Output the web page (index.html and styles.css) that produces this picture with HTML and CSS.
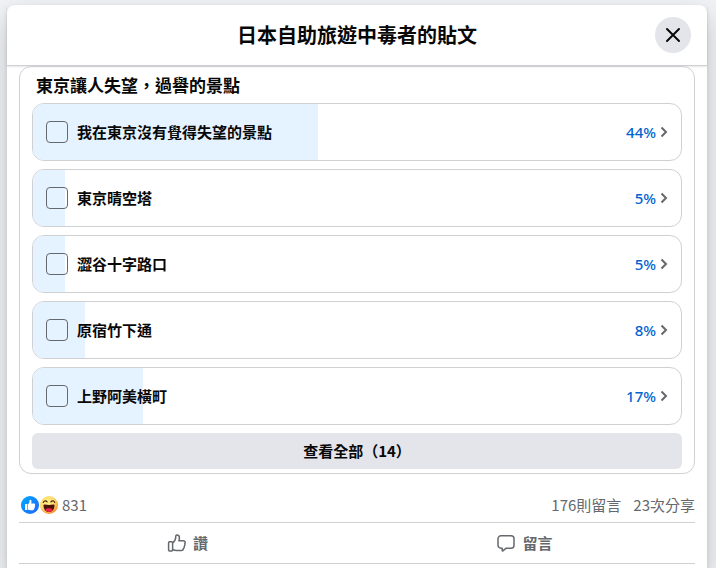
FILE: index.html
```html
<!DOCTYPE html>
<html lang="zh-Hant">
<head>
<meta charset="utf-8">
<meta name="viewport" content="width=device-width, initial-scale=1">
<title>日本自助旅遊中毒者的貼文</title>
<link rel="stylesheet" href="styles.css">
</head>
<body>
<main class="dialog" role="dialog" aria-labelledby="dialog-title">
  <header class="dialog-header">
    <h1 class="dialog-title" id="dialog-title">日本自助旅遊中毒者的貼文</h1>
    <button class="close" type="button" aria-label="關閉">
      <svg width="20" height="20" viewBox="0 0 20 20" fill="none" stroke="currentColor" stroke-width="2" stroke-linecap="round"><path d="M4 4l12 12M16 4L4 16"/></svg>
    </button>
  </header>
  <div class="dialog-body">
    <section class="poll">
      <h2 class="question">東京讓人失望，過譽的景點</h2>
      <ul class="options">
        <li class="option">
          <span class="fill" style="width:44%"></span>
          <input class="check" type="checkbox" id="o1"><label class="name" for="o1">我在東京沒有覺得失望的景點</label>
          <button class="percent" type="button">44%<svg class="chevron" width="8" height="12" viewBox="0 0 8 12"><path d="M1.500 1.500L6 6l-4.500 4.500"/></svg></button>
        </li>
        <li class="option">
          <span class="fill" style="width:5%"></span>
          <input class="check" type="checkbox" id="o2"><label class="name" for="o2">東京晴空塔</label>
          <button class="percent" type="button">5%<svg class="chevron" width="8" height="12" viewBox="0 0 8 12"><path d="M1.500 1.500L6 6l-4.500 4.500"/></svg></button>
        </li>
        <li class="option">
          <span class="fill" style="width:5%"></span>
          <input class="check" type="checkbox" id="o3"><label class="name" for="o3">澀谷十字路口</label>
          <button class="percent" type="button">5%<svg class="chevron" width="8" height="12" viewBox="0 0 8 12"><path d="M1.500 1.500L6 6l-4.500 4.500"/></svg></button>
        </li>
        <li class="option">
          <span class="fill" style="width:8%"></span>
          <input class="check" type="checkbox" id="o4"><label class="name" for="o4">原宿竹下通</label>
          <button class="percent" type="button">8%<svg class="chevron" width="8" height="12" viewBox="0 0 8 12"><path d="M1.500 1.500L6 6l-4.500 4.500"/></svg></button>
        </li>
        <li class="option">
          <span class="fill" style="width:17%"></span>
          <input class="check" type="checkbox" id="o5"><label class="name" for="o5">上野阿美橫町</label>
          <button class="percent" type="button">17%<svg class="chevron" width="8" height="12" viewBox="0 0 8 12"><path d="M1.500 1.500L6 6l-4.500 4.500"/></svg></button>
        </li>
      </ul>
      <button class="view-all" type="button">查看全部（14）</button>
    </section>
    <div class="stats">
      <svg class="reaction" width="18" height="18" viewBox="0 0 18 18" role="img" aria-label="讚">
        <defs><linearGradient id="blue" x1="0" y1="0" x2="1" y2="1"><stop offset="0" stop-color="#02adfc"/><stop offset="0.500" stop-color="#0d86ff"/><stop offset="1" stop-color="#2a64f6"/></linearGradient></defs>
        <circle cx="9" cy="9" r="9" fill="url(#blue)"/>
        <rect x="4" y="8" width="2.400" height="6" rx="0.600" fill="#fff"/>
        <path d="M7 8.300C8 7.500 8.500 6.500 8.500 5.300V4.500c0-1.200 2-1 2 .8 0 .8-.1 1.500-.3 2.200h2.600c1.300 0 1.700 1.200 1 2 .5.600.4 1.400-.2 1.800.3.700 0 1.300-.6 1.600.1.800-.4 1.300-1.300 1.300H9.300c-1 0-1.700-.3-2.300-.7z" fill="#fff"/>
      </svg>
      <svg class="reaction" width="18" height="18" viewBox="0 0 18 18" role="img" aria-label="哈">
        <defs><radialGradient id="yellow" cx="0.400" cy="0.350" r="0.700"><stop offset="0" stop-color="#fff287"/><stop offset="0.600" stop-color="#ffd76a"/><stop offset="1" stop-color="#f68628"/></radialGradient></defs>
        <circle cx="9" cy="9" r="9" fill="url(#yellow)"/>
        <path d="M3.300 6.500c.6-1.800 2.600-2.200 3.800-.6M10.900 5.900c1.200-1.600 3.200-1.200 3.800.6" fill="none" stroke="#4b280e" stroke-width="1.200" stroke-linecap="round"/>
        <path d="M3.500 9.500c0-.8.600-1 1.200-.9 2.900.5 5.700.5 8.600 0 .6-.1 1.200.1 1.200.9 0 3.800-2.300 6.500-5.500 6.500s-5.500-2.700-5.500-6.500z" fill="#4b120a"/>
        <path d="M5.200 14c1.200-1.700 2.500-2 3.800-1.500 1.300-.5 2.600-.2 3.800 1.500C11.800 15.300 10.500 16 9 16s-2.800-.7-3.800-2z" fill="#f0244b"/>
      </svg>
      <span class="count">831</span>
      <a class="stat" href="#comments">176則留言</a>
      <a class="stat" href="#shares">23次分享</a>
    </div>
    <div class="actions">
      <button class="action" type="button">
        <svg width="20" height="20" viewBox="0 0 20 20" fill="none" stroke="currentColor" stroke-width="1.500" stroke-linejoin="round" stroke-linecap="round"><path d="M2.500 8.800h2.200c.5 0 .9.400.9.900v7.400c0 .5-.4.900-.9.900H2.500c-.5 0-.9-.4-.9-.9V9.700c0-.5.400-.9.900-.9z"/><path d="M5.800 9.700C7.700 8.600 8.600 7 8.700 4.300c0-1.300.2-2.300 1.400-2.300 1.400 0 2.300 1.200 2.300 2.800 0 1.100-.2 2-.5 2.900h4.200c1.300 0 2.100.9 2.100 1.900 0 .6-.2 1-.5 1.300.5.900.3 1.800-.4 2.400.2 1-.2 1.700-.9 2.100.1 1.300-.7 2.100-2.100 2.100H9.800c-1.500 0-2.800-.3-4-1"/></svg>
        讚
      </button>
      <button class="action" type="button">
        <svg width="20" height="20" viewBox="0 0 20 20" fill="none" stroke="currentColor" stroke-width="1.500" stroke-linejoin="round"><path d="M5 2.800h10a3 3 0 0 1 3 3v6.400a3 3 0 0 1-3 3h-4.800l-3.300 2.600c-.4.300-.7.100-.7-.4v-2.200H5a3 3 0 0 1-3-3V5.800a3 3 0 0 1 3-3z"/></svg>
        留言
      </button>
    </div>
  </div>
</main>
</body>
</html>
```

FILE: styles.css
```css
* {
  box-sizing: border-box;
}

body {
  margin: 0;
  padding: 5px 9px 0 7px;
  min-height: 100vh;
  display: flex;
  overflow: hidden;
  background: #f1f2f6;
  color: #080809;
  font-family: "Noto Sans CJK TC", sans-serif;
  font-size: 15px;
  line-height: 20px;
}

button {
  border: 0;
  padding: 0;
  background: none;
  color: inherit;
  font: inherit;
  cursor: pointer;
}

.dialog {
  flex: 1;
  background: #fff;
  border-radius: 8px 8px 0 0;
  box-shadow: 0 12px 28px rgba(0, 0, 0, 0.2), 0 2px 4px rgba(0, 0, 0, 0.1);
}

.dialog-header {
  display: grid;
  grid-template-columns: 36px 1fr 36px;
  align-items: center;
  height: 61px;
  padding: 0 16px;
  border-bottom: 1px solid #ced0d4;
  box-shadow: 0 1px 2px rgba(0, 0, 0, 0.1);
}

.dialog-title {
  grid-column: 2;
  margin: 0;
  font-size: 20px;
  line-height: 24px;
  font-weight: 700;
  text-align: center;
}

.close {
  display: grid;
  place-items: center;
  width: 36px;
  height: 36px;
  border-radius: 50%;
  background: #e4e5ea;
}

.dialog-body {
  padding: 0 12px 4px;
}

.poll {
  padding: 8px 12px 4px;
  border: 1px solid #ced0d4;
  border-radius: 12px;
}

.question {
  margin: 0 4px 8px;
  font-size: 17px;
  line-height: 20px;
  font-weight: 700;
}

.options {
  display: grid;
  gap: 8px;
  margin: 0 0 8px;
  padding: 0;
  list-style: none;
}

.option {
  position: relative;
  display: flex;
  align-items: center;
  height: 58px;
  padding: 0 13px;
  border: 1px solid #ced0d4;
  border-radius: 12px;
  overflow: hidden;
}

.fill {
  position: absolute;
  inset: 0 auto 0 0;
  background: #e5f2ff;
}

.check {
  position: relative;
  appearance: none;
  width: 22px;
  height: 22px;
  margin: 0 9px 0 0;
  border: 1px solid #65686c;
  border-radius: 4px;
}

.check:checked {
  background: #0064d1;
}

.name {
  position: relative;
  flex: 1;
  font-weight: 700;
}

.percent {
  display: flex;
  align-items: center;
  gap: 4px;
  color: #0064d1;
  font-family: "Noto Sans", sans-serif;
  font-weight: 500;
}

.chevron {
  fill: none;
  stroke: #65686c;
  stroke-width: 2;
}

.view-all {
  display: block;
  width: 100%;
  height: 36px;
  border-radius: 6px;
  background: #e4e5ea;
  font-weight: 700;
}

.stats {
  display: flex;
  align-items: center;
  padding: 21px 0 7px 2px;
  border-bottom: 1px solid #ced0d4;
  color: #65686c;
}

.reaction + .reaction {
  margin-left: 1px;
}

.count {
  flex: 1;
  margin-left: 4px;
}

.stat {
  margin-left: 12px;
  color: inherit;
  text-decoration: none;
}

.actions {
  display: grid;
  grid-template-columns: 1fr 1fr;
  padding-right: 2px;
  border-bottom: 1px solid #ced0d4;
  color: #65686c;
}

.action {
  display: flex;
  align-items: center;
  justify-content: center;
  gap: 6px;
  height: 40px;
  font-weight: 700;
}
```
